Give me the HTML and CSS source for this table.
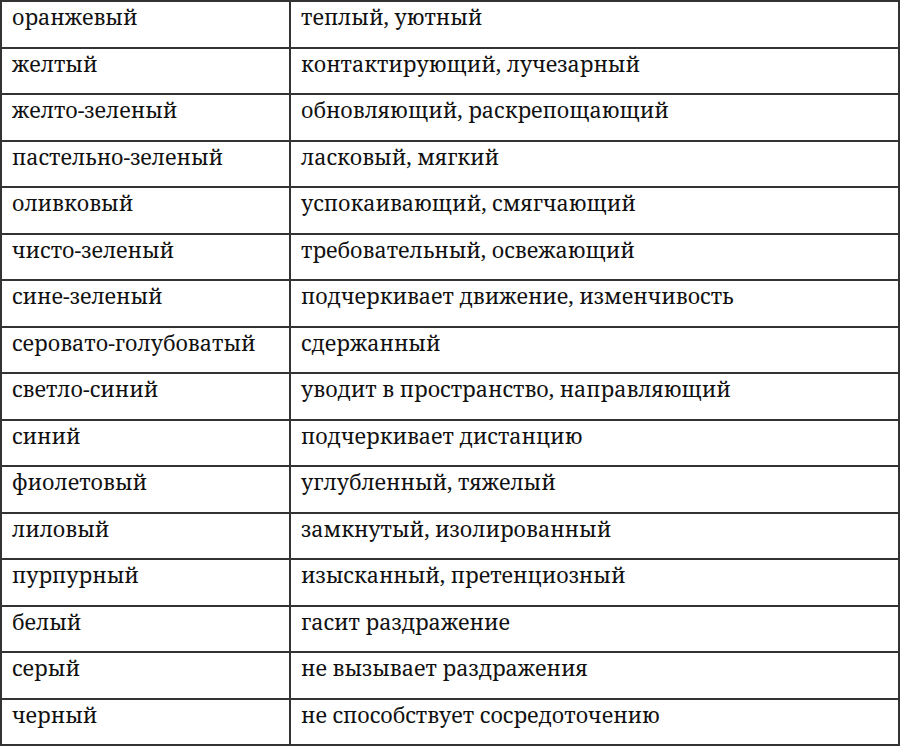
FILE: index.html
```html
<!DOCTYPE html>
<html>
<head>
<meta charset="utf-8">
<link rel="stylesheet" href="styles.css">
</head>
<body>
<div class="grid">
<div class="cell c1">оранжевый</div><div class="cell c2">теплый, уютный</div>
<div class="cell c1">желтый</div><div class="cell c2">контактирующий, лучезарный</div>
<div class="cell c1">желто-зеленый</div><div class="cell c2">обновляющий, раскрепощающий</div>
<div class="cell c1">пастельно-зеленый</div><div class="cell c2">ласковый, мягкий</div>
<div class="cell c1">оливковый</div><div class="cell c2">успокаивающий, смягчающий</div>
<div class="cell c1">чисто-зеленый</div><div class="cell c2">требовательный, освежающий</div>
<div class="cell c1">сине-зеленый</div><div class="cell c2">подчеркивает движение, изменчивость</div>
<div class="cell c1">серовато-голубоватый</div><div class="cell c2">сдержанный</div>
<div class="cell c1">светло-синий</div><div class="cell c2">уводит в пространство, направляющий</div>
<div class="cell c1">синий</div><div class="cell c2">подчеркивает дистанцию</div>
<div class="cell c1">фиолетовый</div><div class="cell c2">углубленный, тяжелый</div>
<div class="cell c1">лиловый</div><div class="cell c2">замкнутый, изолированный</div>
<div class="cell c1">пурпурный</div><div class="cell c2">изысканный, претенциозный</div>
<div class="cell c1">белый</div><div class="cell c2">гасит раздражение</div>
<div class="cell c1">серый</div><div class="cell c2">не вызывает раздражения</div>
<div class="cell c1">черный</div><div class="cell c2">не способствует сосредоточению</div>
</div>
</body>
</html>
```
FILE: styles.css
```css
html, body {
  margin: 0;
  padding: 0;
  background: #ffffff;
}
body {
  font-family: "Noto Serif", "DejaVu Serif", "Liberation Serif", serif;
  font-size: 21.5px;
  color: #111111;
}
.grid {
  width: 900px;
  height: 746px;
  box-sizing: border-box;
  display: grid;
  grid-template-columns: 289px 1fr;
  grid-template-rows: repeat(16, 1fr);
  border-top: 2px solid #333333;
  border-left: 2px solid #333333;
}
.cell {
  border-right: 2px solid #333333;
  border-bottom: 2px solid #333333;
  padding: 0 10px;
  line-height: normal;
  white-space: nowrap;
}
```
